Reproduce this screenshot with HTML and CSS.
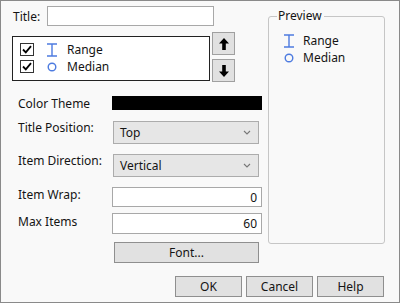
FILE: index.html
```html
<!DOCTYPE html>
<html lang="en">
  <head>
    <meta charset="UTF-8" />
    <title>Legend Settings</title>
    <link rel="stylesheet" href="styles.css">
  </head>
  <body>
    <div class="dialog">
      <div class="main">
        <div class="left">
          <div class="title-row">
            <label class="title-label">Title:</label>
            <input class="text-input title-input" type="text" />
          </div>

          <div class="list-row">
            <div class="item-list">
              <div class="item">
                <span class="check">
                  <svg width="10" height="9" viewBox="0 0 10 9"><path d="M1 4.5 L3.8 7.3 L9 1.2" fill="none" stroke="#000" stroke-width="1.8"/></svg>
                </span>
                <svg class="icon" width="12" height="14" viewBox="0 0 12 14"><path d="M1 1 H11 M6 1 V13 M1 13 H11" fill="none" stroke="#4d7be0" stroke-width="1.4"/></svg>
                <span>Range</span>
              </div>
              <div class="item">
                <span class="check">
                  <svg width="10" height="9" viewBox="0 0 10 9"><path d="M1 4.5 L3.8 7.3 L9 1.2" fill="none" stroke="#000" stroke-width="1.8"/></svg>
                </span>
                <svg class="icon" width="12" height="14" viewBox="0 0 12 14"><circle cx="6" cy="7" r="3.8" fill="none" stroke="#4d7be0" stroke-width="1.4"/></svg>
                <span>Median</span>
              </div>
            </div>
            <div class="arrows">
              <button class="arrow-btn">
                <svg width="10" height="12" viewBox="0 0 10 12"><path d="M5 0 L10 5.5 H6.8 V12 H3.2 V5.5 H0 Z" fill="#000"/></svg>
              </button>
              <button class="arrow-btn">
                <svg width="10" height="12" viewBox="0 0 10 12"><path d="M5 12 L10 6.5 H6.8 V0 H3.2 V6.5 H0 Z" fill="#000"/></svg>
              </button>
            </div>
          </div>

          <div class="form">
            <div class="row row-theme">
              <span class="lbl">Color Theme</span>
              <div class="swatch"></div>
            </div>
            <div class="row row-select">
              <span class="lbl">Title Position:</span>
              <div class="select">
                <span>Top</span>
                <svg width="8" height="5" viewBox="0 0 8 5"><path d="M1 1 L4 4 L7 1" fill="none" stroke="#777" stroke-width="1.1"/></svg>
              </div>
            </div>
            <div class="row row-select">
              <span class="lbl">Item Direction:</span>
              <div class="select">
                <span>Vertical</span>
                <svg width="8" height="5" viewBox="0 0 8 5"><path d="M1 1 L4 4 L7 1" fill="none" stroke="#777" stroke-width="1.1"/></svg>
              </div>
            </div>
            <div class="row row-wrap">
              <span class="lbl">Item Wrap:</span>
              <input class="text-input num-input" type="text" value="0" />
            </div>
            <div class="row row-max">
              <span class="lbl">Max Items</span>
              <input class="text-input num-input max-input" type="text" value="60" />
            </div>
            <div class="row row-font">
              <span class="lbl"></span>
              <button class="btn font-btn">Font...</button>
            </div>
          </div>
        </div>

        <fieldset class="preview">
          <legend>Preview</legend>
          <div class="preview-item">
            <svg class="icon" width="12" height="14" viewBox="0 0 12 14"><path d="M1 1 H11 M6 1 V13 M1 13 H11" fill="none" stroke="#4d7be0" stroke-width="1.4"/></svg>
            <span>Range</span>
          </div>
          <div class="preview-item">
            <svg class="icon" width="12" height="14" viewBox="0 0 12 14"><circle cx="6" cy="7" r="3.8" fill="none" stroke="#4d7be0" stroke-width="1.4"/></svg>
            <span>Median</span>
          </div>
        </fieldset>
      </div>

      <div class="actions">
        <button class="btn">OK</button>
        <button class="btn">Cancel</button>
        <button class="btn">Help</button>
      </div>
    </div>
  </body>
</html>
```

FILE: styles.css
```css
body {
  margin: 0;
  padding: 0;
  font-family: "Noto Sans", "Open Sans", sans-serif;
  font-size: 12px;
  color: #141414;
}
.dialog {
  width: 400px;
  height: 303px;
  box-sizing: border-box;
  border: 1px solid #8a8a8a;
  background: #f9f9f9;
  display: flex;
  flex-direction: column;
  padding-left: 11px;
}
.main {
  display: flex;
}
.left {
  width: 256px;
}

/* title */
.title-row {
  display: flex;
  align-items: center;
  margin-top: 5px;
  height: 20px;
}
.title-label {
  width: 34px;
  padding-left: 1px;
}
.text-input {
  box-sizing: border-box;
  border: 1px solid #a8a8a8;
  background: #fff;
  font-family: inherit;
  font-size: 12px;
  color: #141414;
  margin: 0;
  outline: none;
}
.title-input {
  width: 167px;
  height: 20px;
}

/* item list */
.list-row {
  display: flex;
  margin-top: 6px;
  height: 50px;
}
.item-list {
  box-sizing: border-box;
  width: 198px;
  height: 45px;
  margin-top: 4px;
  border: 1px solid #222;
  background: #fff;
  padding: 4px 0 0 7px;
}
.item {
  display: flex;
  align-items: center;
  height: 17px;
}
.check {
  box-sizing: border-box;
  width: 14px;
  height: 13px;
  border: 1px solid #333;
  background: #fff;
  display: flex;
  align-items: center;
  justify-content: center;
}
.item .icon {
  margin-left: 12px;
}
.item span:last-child {
  margin-left: 9px;
}
.arrows {
  display: flex;
  flex-direction: column;
  gap: 4px;
  margin-left: 2px;
}
.arrow-btn {
  box-sizing: border-box;
  width: 23px;
  height: 23px;
  padding: 0;
  border: 1px solid #a0a0a0;
  background: #e1e1e1;
  display: flex;
  align-items: center;
  justify-content: center;
}

/* form rows */
.form {
  margin-left: 6px;
}
.row {
  display: flex;
  align-items: flex-start;
}
.lbl {
  width: 94px;
  line-height: 16px;
}
.row-theme {
  margin-top: 14px;
}
.swatch {
  width: 150px;
  height: 14px;
  background: #000;
}
.row-select {
  margin-top: 9px;
}
.row-select + .row-select {
  margin-top: 10px;
}
.row-select .lbl {
  margin-top: -1px;
}
.select {
  box-sizing: border-box;
  width: 146px;
  height: 23px;
  margin-left: 1px;
  border: 1px solid #acacac;
  background: #e6e6e6;
  display: flex;
  align-items: center;
  justify-content: space-between;
  padding: 0 7px 0 6px;
}
.row-wrap {
  margin-top: 10px;
}
.num-input {
  width: 150px;
  height: 20px;
  text-align: right;
  padding-right: 4px;
}
.row-max {
  margin-top: 6px;
}
.row-max .lbl {
  margin-top: 1px;
}
.max-input {
  height: 21px;
}
.row-font {
  margin-top: 8px;
}

.btn {
  box-sizing: border-box;
  height: 21px;
  padding: 0;
  border: 1px solid #8f8f8f;
  background: #e1e1e1;
  font-family: inherit;
  font-size: 12px;
  color: #141414;
}
.font-btn {
  width: 145px;
  margin-left: 2px;
}

/* preview */
.preview {
  box-sizing: border-box;
  margin: 7px 0 0 0;
  width: 117px;
  height: 236px;
  border: 1px solid #c6c6c6;
  border-radius: 3px;
  padding: 0 0 0 8px;
}
.preview legend {
  padding: 0 2px 0 1px;
  line-height: 16px;
}
.preview-item {
  display: flex;
  align-items: center;
  height: 17px;
  margin-left: 6px;
}
.preview-item:first-of-type {
  margin-top: 8px;
}
.preview-item span {
  margin-left: 8px;
}

/* bottom buttons */
.actions {
  margin-top: auto;
  margin-bottom: 5px;
  display: flex;
  justify-content: flex-end;
  gap: 4px;
  padding-right: 15px;
}
.actions .btn {
  width: 67px;
}
```
